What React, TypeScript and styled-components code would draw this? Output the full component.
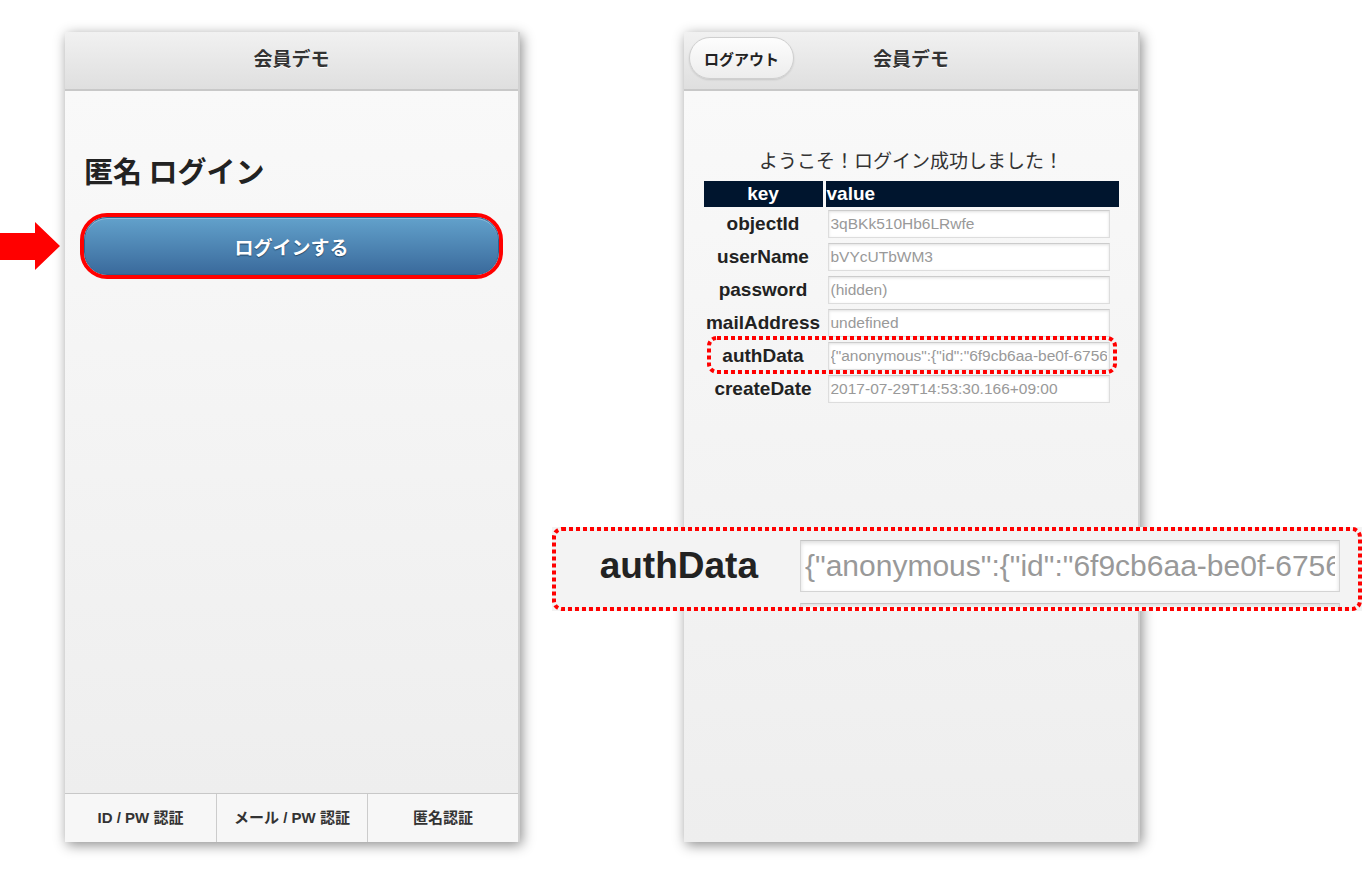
import React from "react";
import styled, { createGlobalStyle } from "styled-components";

const GlobalStyle = createGlobalStyle`
  html, body { margin: 0; padding: 0; background: #ffffff; }
  body { font-family: "Liberation Sans", "Noto Sans CJK JP", sans-serif; }
  * { box-sizing: border-box; }
`;

const JP = `"Noto Sans CJK JP", "Liberation Sans", sans-serif`;
const LATIN = `"Liberation Sans", "Noto Sans CJK JP", sans-serif`;

const Page = styled.div`
  position: relative;
  width: 1363px;
  height: 875px;
  overflow: hidden;
  display: flex;
  align-items: flex-start;
  gap: 164px;
  padding: 32px 0 0 65px;
`;

const Phone = styled.div<{ $w: number }>`
  width: ${(p) => p.$w}px;
  height: 810px;
  display: flex;
  flex-direction: column;
  border-right: 2px solid #d2d2d2;
  box-shadow: 2px 3px 12px rgba(0, 0, 0, 0.45);
  background: #f3f3f3;
`;

const Header = styled.div`
  flex-shrink: 0;
  height: 59px;
  border-bottom: 2px solid #c8c8c8;
  background: linear-gradient(#f1f1f1, #dfdfdf);
  display: grid;
  grid-template-columns: 1fr auto 1fr;
  align-items: center;
  padding: 0 5px 5px;
`;

const Title = styled.h1`
  grid-column: 2;
  margin: 0;
  font-family: ${JP};
  font-weight: 700;
  font-size: 19px;
  line-height: 26px;
  color: #333;
  text-shadow: 0 1px 0 #fff;
`;

const PillButton = styled.button`
  grid-column: 1;
  justify-self: start;
  width: 105px;
  height: 42px;
  border: 1px solid #cfcfcf;
  border-radius: 21px;
  background: linear-gradient(#fdfdfd, #ededed);
  box-shadow: 0 1px 2px rgba(0, 0, 0, 0.12);
  font-family: ${JP};
  font-weight: 700;
  font-size: 15px;
  color: #222;
  padding: 0;
`;

const Content = styled.div<{ $center?: boolean }>`
  flex: 1;
  background: linear-gradient(#f9f9f9, #eeeeee);
  display: flex;
  flex-direction: column;
  align-items: ${(p) => (p.$center ? "center" : "stretch")};
  padding: ${(p) => (p.$center ? "56px 0 0" : "62px 19px 0")};
`;

const Heading = styled.h2`
  margin: 0 0 26px;
  font-family: ${JP};
  font-weight: 700;
  font-size: 29px;
  line-height: 34px;
  color: #222;
`;

const Ring = styled.div`
  margin: 0 -4px;
  border: 4px solid #ff0000;
  border-radius: 27px;
`;

const LoginButton = styled.button`
  display: block;
  width: 100%;
  height: 58px;
  border: 1px solid #2f5f8d;
  border-radius: 23px;
  background: linear-gradient(#62a1cb, #3a6a9c);
  box-shadow: inset 0 1px 0 rgba(255, 255, 255, 0.3);
  color: #fff;
  font-family: ${JP};
  font-weight: 700;
  font-size: 19px;
  text-shadow: 0 1px 1px #1f4466;
`;

const Footer = styled.nav`
  flex-shrink: 0;
  height: 49px;
  display: grid;
  grid-template-columns: repeat(3, 1fr);
  border-top: 1px solid #c8c8c8;
  background: #f7f7f7;
`;

const Tab = styled.div<{ $first?: boolean }>`
  display: flex;
  align-items: center;
  justify-content: center;
  padding-bottom: 3px;
  border-left: ${(p) => (p.$first ? "none" : "1px solid #cccccc")};
  font-family: ${LATIN};
  font-weight: 700;
  font-size: 15px;
  color: #333;
`;

const Welcome = styled.p`
  margin: 0 0 8px;
  font-family: ${JP};
  font-size: 19px;
  line-height: 26px;
  color: #333;
`;

const Table = styled.div`
  width: 415px;
  display: flex;
  flex-direction: column;
  gap: 5px;
`;

const HeadRow = styled.div`
  display: grid;
  grid-template-columns: 119px 293px;
  column-gap: 3px;
  height: 26px;
  margin-bottom: -2px;
`;

const HeadCell = styled.div<{ $center?: boolean }>`
  background: #00152e;
  color: #fff;
  font-family: ${LATIN};
  font-weight: 700;
  font-size: 19px;
  line-height: 26px;
  text-align: ${(p) => (p.$center ? "center" : "left")};
  padding-left: ${(p) => (p.$center ? "0" : "1px")};
`;

const Row = styled.div`
  position: relative;
  display: grid;
  grid-template-columns: 119px 293px;
  column-gap: 3px;
  height: 28px;
  align-items: center;
`;

const Key = styled.div`
  text-align: center;
  font-family: ${LATIN};
  font-weight: 700;
  font-size: 19px;
  color: #222;
  white-space: nowrap;
`;

const ValueInput = styled.input`
  margin-left: 2px;
  width: 282px;
  height: 28px;
  border: 1px solid #dddddd;
  border-top-color: #cccccc;
  background: #fff;
  box-shadow: inset 0 1px 3px rgba(0, 0, 0, 0.12);
  font-family: ${LATIN};
  font-size: 15.5px;
  color: #999;
  padding: 0 2px;
  outline: none;
`;

const Overlay = styled.svg<{ $left: number; $top: number }>`
  position: absolute;
  left: ${(p) => p.$left}px;
  top: ${(p) => p.$top}px;
  pointer-events: none;
  overflow: visible;
`;

const Arrow = styled.svg`
  position: absolute;
  left: 0;
  top: 222px;
`;

const Callout = styled.div`
  position: absolute;
  left: 552px;
  top: 527px;
  width: 810px;
  height: 84px;
  overflow: hidden;
  background: #f3f3f3;
  display: grid;
  grid-template-columns: 206px 540px;
  grid-auto-rows: 52px;
  column-gap: 42px;
  row-gap: 11px;
  padding-top: 13px;
`;

const BigKey = styled.div`
  align-self: center;
  text-align: right;
  font-family: ${LATIN};
  font-weight: 700;
  font-size: 37px;
  color: #222;
`;

const BigInput = styled.input`
  width: 540px;
  height: 52px;
  border: 1px solid #d4d4d4;
  border-top-color: #c4c4c4;
  background: #fff;
  box-shadow: inset 0 2px 4px rgba(0, 0, 0, 0.14);
  font-family: ${LATIN};
  font-size: 30px;
  color: #999;
  padding: 0 4px;
  outline: none;
`;

function DottedFrame({ left, top, w, h }: { left: number; top: number; w: number; h: number }) {
  return (
    <Overlay $left={left} $top={top} width={w} height={h} viewBox={`0 0 ${w} ${h}`}>
      <rect x={2} y={2} width={w - 4} height={h - 4} rx={8} fill="none" stroke="#ff0000" strokeWidth={4} strokeDasharray="4 3" />
    </Overlay>
  );
}

const AUTH = '{"anonymous":{"id":"6f9cb6aa-be0f-6756-8f4e-2a1c9b7e0d31"}}';

const rows: { k: string; v: string; mark?: boolean }[] = [
  { k: "objectId", v: "3qBKk510Hb6LRwfe" },
  { k: "userName", v: "bVYcUTbWM3" },
  { k: "password", v: "(hidden)" },
  { k: "mailAddress", v: "undefined" },
  { k: "authData", v: AUTH, mark: true },
  { k: "createDate", v: "2017-07-29T14:53:30.166+09:00" },
];

export default function App() {
  return (
    <>
      <GlobalStyle />
      <Page>
        <Arrow width={61} height={49} viewBox="0 0 61 49">
          <polygon points="0,11 35,11 35,0 60,24 35,48 35,38 0,38" fill="#ff0000" />
        </Arrow>

        <Phone $w={455}>
          <Header>
            <Title>会員デモ</Title>
          </Header>
          <Content>
            <Heading>匿名 ログイン</Heading>
            <Ring>
              <LoginButton>ログインする</LoginButton>
            </Ring>
          </Content>
          <Footer>
            <Tab $first>ID / PW 認証</Tab>
            <Tab>メール / PW 認証</Tab>
            <Tab>匿名認証</Tab>
          </Footer>
        </Phone>

        <Phone $w={456}>
          <Header>
            <PillButton>ログアウト</PillButton>
            <Title>会員デモ</Title>
          </Header>
          <Content $center>
            <Welcome>ようこそ！ログイン成功しました！</Welcome>
            <Table>
              <HeadRow>
                <HeadCell $center>key</HeadCell>
                <HeadCell>value</HeadCell>
              </HeadRow>
              {rows.map((r) => (
                <Row key={r.k}>
                  <Key>{r.k}</Key>
                  <ValueInput readOnly value={r.v} />
                  {r.mark && <DottedFrame left={3} top={-6} w={410} h={38} />}
                </Row>
              ))}
            </Table>
          </Content>
        </Phone>

        <Callout>
          <BigKey>authData</BigKey>
          <BigInput readOnly value={AUTH} />
          <span />
          <BigInput readOnly value="2017-07-29T14:53:30.166+09:00" />
          <DottedFrame left={0} top={0} w={810} h={84} />
        </Callout>
      </Page>
    </>
  );
}
